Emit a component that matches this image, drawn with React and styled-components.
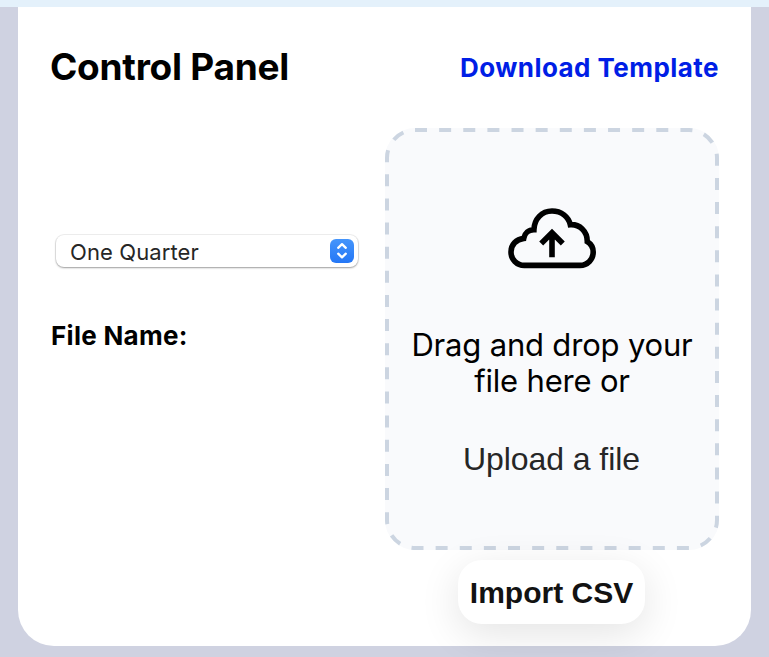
import React from "react";
import styled, { createGlobalStyle } from "styled-components";

const GlobalStyle = createGlobalStyle`
  * { box-sizing: border-box; }
  body { margin: 0; background: #cfd2e1; overflow: hidden; }
  h1, h2, p { margin: 0; }
  button { border: 0; padding: 0; background: none; font: inherit; }
`;

const Page = styled.main`
  display: flex;
  flex-direction: column;
  height: 657px;
  padding: 0 18px 11px;
  border-top: 7px solid #e4f1fb;
  background: #cfd2e1;
  font-family: Inter, sans-serif;
  color: #000;
`;

const Panel = styled.section`
  display: flex;
  flex-direction: column;
  flex: 1;
  padding: 36px 32px 0 33px;
  border-radius: 0 0 36px 36px;
  background: #fff;
`;

const Header = styled.header`
  display: flex;
  justify-content: space-between;
  align-items: center;
  height: 48px;
  white-space: nowrap;
`;

const Title = styled.h1`
  margin-left: -1px;
  font-size: 37px;
  font-weight: 700;
  line-height: 48px;
  letter-spacing: -0.25px;
`;

const TemplateLink = styled.a`
  padding-top: 2px;
  font-size: 26px;
  font-weight: 700;
  line-height: 32px;
  letter-spacing: 0.45px;
  color: #001ee6;
`;

const Content = styled.div`
  display: flex;
  justify-content: space-between;
  margin-top: 37px;
`;

const Settings = styled.div`
  display: flex;
  flex-direction: column;
  padding-top: 107px;
  white-space: nowrap;
`;

const SelectButton = styled.button`
  display: flex;
  align-items: center;
  justify-content: space-between;
  width: 302px;
  height: 32px;
  margin-left: 5px;
  padding: 0 4px 0 14px;
  border-radius: 8px;
  background: #fff;
  box-shadow: 0 0 0 1px rgba(0, 0, 0, 0.06), 0 1px 2px rgba(0, 0, 0, 0.34);
  color: #262626;
  font-size: 22px;
  line-height: 32px;
`;

const SelectValue = styled.span`
  padding-top: 2px;
  letter-spacing: 0.1px;
`;

const Stepper = styled.span`
  display: flex;
  width: 24px;
  height: 24px;
  border-radius: 6px;
  background: linear-gradient(#4595fb, #2477f6);
`;

const FileLabel = styled.h2`
  margin-top: 53px;
  font-size: 26px;
  font-weight: 700;
  line-height: 32px;
  letter-spacing: 0.3px;
`;

const Uploads = styled.div`
  display: flex;
  flex-direction: column;
  align-items: center;
  width: 334px;
`;

const DropZone = styled.div`
  position: relative;
  display: flex;
  flex-direction: column;
  align-items: center;
  width: 334px;
  height: 422px;
  padding-top: 62px;
  border-radius: 30px;
  background: #f9fafc;
`;

const DashedOutline = styled.svg`
  position: absolute;
  inset: 0;
  pointer-events: none;
`;

const CloudIcon = styled.svg`
  margin-right: 4px;
`;

const DropText = styled.p`
  margin-top: 37px;
  font-size: 31px;
  line-height: 36px;
  letter-spacing: -0.18px;
  text-align: center;
  white-space: nowrap;
`;

const UploadButton = styled.button`
  margin: 42px 1px 0 0;
  font-family: "Liberation Sans", Arial, sans-serif;
  font-size: 32px;
  line-height: 36px;
  letter-spacing: -0.08px;
  color: #262626;
  white-space: nowrap;
`;

const ImportButton = styled.button`
  position: relative;
  width: 187px;
  height: 64px;
  margin: 10px 1px 0 0;
  padding-top: 2px;
  border-radius: 24px;
  background: #fff;
  box-shadow: 0 10px 40px rgba(0, 0, 0, 0.11);
  font-family: "Liberation Sans", Arial, sans-serif;
  font-size: 30px;
  font-weight: 700;
  color: #121212;
  white-space: nowrap;
`;

function DropOutline() {
  return (
    <DashedOutline width="334" height="422" viewBox="0 0 334 422" fill="none" aria-hidden="true">
      <rect x="2" y="2" width="330" height="418" rx="28" stroke="#ccd5e1" strokeWidth="4" strokeDasharray="12 12.13" />
    </DashedOutline>
  );
}

function CloudUpload() {
  return (
    <CloudIcon width="120" height="100" viewBox="0 0 120 100" fill="none" stroke="#000" strokeWidth="5.6">
      <path d="M34.3 75.4C26.8 75.4 21 69.4 21 62S26.2 49.3 33.7 48.4C34.7 43.3 38.6 39.8 43.9 39.8C44.2 29 51.8 21 62 21C71.4 21 78.5 26.8 80.3 34.7C89.5 34.1 97.3 41 97.3 51.6C101.2 54 103.2 58 103.2 62C103.2 69.4 97.5 75.4 90 75.4Z" />
      <path d="M62 67.3V43M51.2 53.5L62 42.7L72.8 53.5" />
    </CloudIcon>
  );
}

function Chevrons() {
  return (
    <svg width="24" height="24" viewBox="0 0 24 24" fill="none" stroke="#fff" strokeWidth="2.3" strokeLinecap="round" strokeLinejoin="round">
      <path d="M8.2 8.8L12 5.2L15.8 8.8M8.2 14.7L12 18.3L15.8 14.7" />
    </svg>
  );
}

export default function App() {
  return (
    <>
      <GlobalStyle />
      <Page>
        <Panel>
          <Header>
            <Title>Control Panel</Title>
            <TemplateLink>Download Template</TemplateLink>
          </Header>
          <Content>
            <Settings>
              <SelectButton>
                <SelectValue>One Quarter</SelectValue>
                <Stepper><Chevrons /></Stepper>
              </SelectButton>
              <FileLabel>File Name:</FileLabel>
            </Settings>
            <Uploads>
              <DropZone>
                <DropOutline />
                <CloudUpload />
                <DropText>Drag and drop your<br />file here or</DropText>
                <UploadButton>Upload a file</UploadButton>
              </DropZone>
              <ImportButton>Import CSV</ImportButton>
            </Uploads>
          </Content>
        </Panel>
      </Page>
    </>
  );
}
